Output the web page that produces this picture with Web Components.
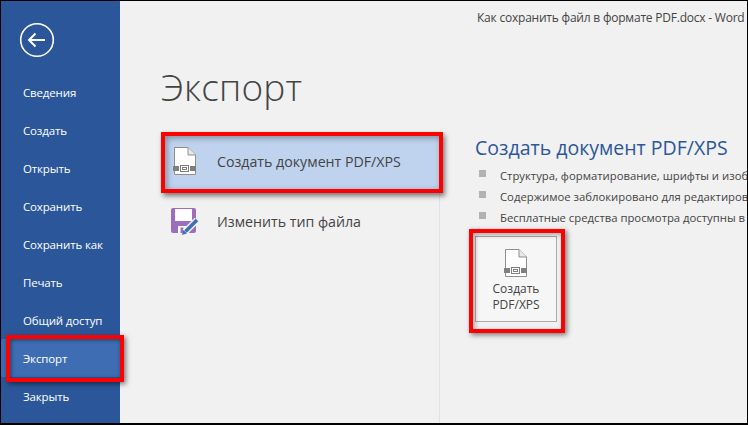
<!DOCTYPE html>
<html><head><meta charset="utf-8"><style>
html,body{margin:0;padding:0;background:#000;}
body{width:748px;height:425px;overflow:hidden;font-family:"Open Sans","Noto Sans",sans-serif;}
</style></head><body>
<word-backstage>
  <nav-rail slot="rail">
    <nav-item>Сведения</nav-item><nav-item>Создать</nav-item><nav-item>Открыть</nav-item><nav-item>Сохранить</nav-item><nav-item>Сохранить как</nav-item><nav-item>Печать</nav-item><nav-item>Общий доступ</nav-item><nav-item active>Экспорт</nav-item><nav-item>Закрыть</nav-item>
  </nav-rail>
  <export-pane slot="main"></export-pane>
</word-backstage>
<script>
function def(name,html){
  customElements.define(name,class extends HTMLElement{
    constructor(){super();this.attachShadow({mode:'open'}).innerHTML=html;}
    connectedCallback(){const l=this.shadowRoot.getElementById('l');if(l)l.textContent=this.getAttribute('label');}
  });
}
def('word-backstage',`<style>
:host{display:block;width:748px;height:425px;padding:1px 0 0 1px;box-sizing:border-box;background:#000}
.w{display:flex;width:746px;height:422px;background:#f1f1f1}
</style><div class="w"><slot name="rail"></slot><slot name="main"></slot></div>`);
def('nav-rail',`<style>
:host{display:flex;flex-direction:column;width:119px;height:422px;flex:none;background:#2b579a;padding-top:72px;box-sizing:border-box;position:relative;z-index:2}
svg{position:absolute;left:18px;top:21px}
</style><svg width="36" height="36" viewBox="0 0 36 36" fill="none" stroke="#fff"><circle cx="18" cy="18" r="16.3" stroke-width="1.6"/><path d="M10 18H26" stroke-width="2"/><path d="M16.500 11.500L10 18L16.500 24.500" stroke-width="2"/></svg><slot></slot>`);
def('nav-item',`<style>
:host{display:flex;align-items:center;height:38px;padding-left:22px;font-size:11.5px;letter-spacing:-.15px;color:#fff;flex:none;position:relative;white-space:nowrap}
:host([active]){background:#3e6db4}
:host([active]) .f{display:block}
.f{display:none;position:absolute;left:5px;top:-4px;width:110px;height:39px;border:4px solid #f00;box-shadow:2px 2px 5px rgba(0,0,0,.5),inset 1px 1px 4px rgba(0,0,0,.45)}
</style><slot></slot><span class="f"></span>`);
def('doc-icon',`<style>:host{display:block;width:24px;height:28px;flex:none}svg{display:block}</style>
<svg width="24" height="28" viewBox="0 0 24 28" fill="none"><path d="M1.500 .5H15L22.500 8V27.500H1.500Z" fill="#fff" stroke="#8f8f8f"/><path d="M15 .5V8H22.500" fill="#e8e8e8" stroke="#8f8f8f"/><rect x="0" y="19" width="6" height="5" fill="#7f7f7f"/><rect x="17" y="19" width="6" height="5" fill="#7f7f7f"/><rect x="7.500" y="18.500" width="8" height="6" fill="#fff" stroke="#7f7f7f"/><rect x="9.500" y="20.500" width="4" height="2" fill="#fff" stroke="#7f7f7f"/></svg>`);
def('export-pane',`<style>
:host{display:flex;flex-direction:column;flex:1;height:422px;position:relative;min-width:0;overflow:hidden;color:#444}
.title{font-size:12px;letter-spacing:-.22px;color:#444;height:61px;flex:none;padding:8px 0 0 357px;box-sizing:border-box;white-space:nowrap}
h1{margin:0;font-weight:300;font-size:37px;line-height:50px;color:#444;padding-left:41px;letter-spacing:.2px;flex:none}
.cols{display:flex;margin-top:20px;flex:1;min-height:0}
.left{width:320px;flex:none;padding-left:42px;box-sizing:border-box;border-right:1px solid #e2e2e2;display:flex;flex-direction:column;gap:2px}
.right{padding:3px 0 0 35px;white-space:nowrap;min-width:0}
h2{margin:0;font-weight:400;font-size:19.500px;line-height:26px;color:#2b579a}
ul{margin:4px 0 0;padding:0;list-style:none;font-size:11.300px;color:#444}
li{display:flex;align-items:center;height:21px}
li i{width:7px;height:7px;background:#b2b2b2;margin:0 14px 0 4px;flex:none;position:relative;top:-2px}
</style>
<div class="title">Как сохранить файл в формате PDF.docx - Word (</div>
<h1>Экспорт</h1>
<div class="cols">
<div class="left"><export-option active label="Создать документ PDF/XPS"><doc-icon slot="icon" style="margin-left:11px"></doc-icon></export-option><export-option label="Изменить тип файла"><svg slot="icon" width="29" height="28" viewBox="0 0 29 28" style="margin:2px 0 0 9px;display:block"><rect x="0" y="0" width="25" height="25" rx="2" fill="#9e6dbb"/><rect x="4" y="1" width="17" height="12" fill="#fff"/><rect x="7" y="18" width="11" height="7" fill="#fff"/><rect x="9.500" y="19.500" width="3" height="5.500" fill="#9e6dbb"/><path d="M14 24L26 12" fill="none" stroke="#f1f1f1" stroke-width="6.500"/><path d="M14.500 23.500L26 12" fill="none" stroke="#3f70b5" stroke-width="3.500"/><path d="M11 27L12.500 22L16 25.500Z" fill="#3f70b5"/></svg></export-option></div>
<div class="right"><h2>Создать документ PDF/XPS</h2>
<ul><li><i></i>Структура, форматирование, шрифты и изоб</li><li><i></i>Содержимое заблокировано для редактиров</li><li><i></i>Бесплатные средства просмотра доступны в</li></ul>
<big-button></big-button></div>
</div>`);
def('export-option',`<style>
:host{display:flex;align-items:center;width:277px;height:58px;flex:none;position:relative;font-size:14.200px;color:#444;box-sizing:border-box;white-space:nowrap}
:host([active]){background:#bfd3ef}
:host([active]) .f{display:block}
.i{width:55px;flex:none}
.f{display:none;position:absolute;left:-1px;top:0;right:-4px;bottom:-3px;border:4px solid #f00;box-shadow:2px 3px 5px rgba(0,0,0,.5),inset 2px 2px 6px rgba(0,0,0,.35)}
</style><div class="i"><slot name="icon"></slot></div><span id="l"></span><span class="f"></span>`);
def('big-button',`<style>
:host{display:flex;flex-direction:column;align-items:center;width:80px;height:84px;margin:8px 0 0 0;box-sizing:content-box;border:1px solid #ababab;background:#f6f6f6;position:relative;font-size:12px;line-height:16px;color:#444;text-align:center;white-space:normal}
doc-icon{margin-top:12px;margin-bottom:4px}
.f{position:absolute;left:-7px;top:-8px;right:-9px;bottom:-12px;border:4px solid #f00;box-shadow:2px 2px 5px rgba(0,0,0,.5),inset 2px 2px 5px rgba(0,0,0,.3)}
</style><doc-icon></doc-icon><span>Создать<br>PDF/XPS</span><span class="f"></span>`);
</script>
</body></html>
